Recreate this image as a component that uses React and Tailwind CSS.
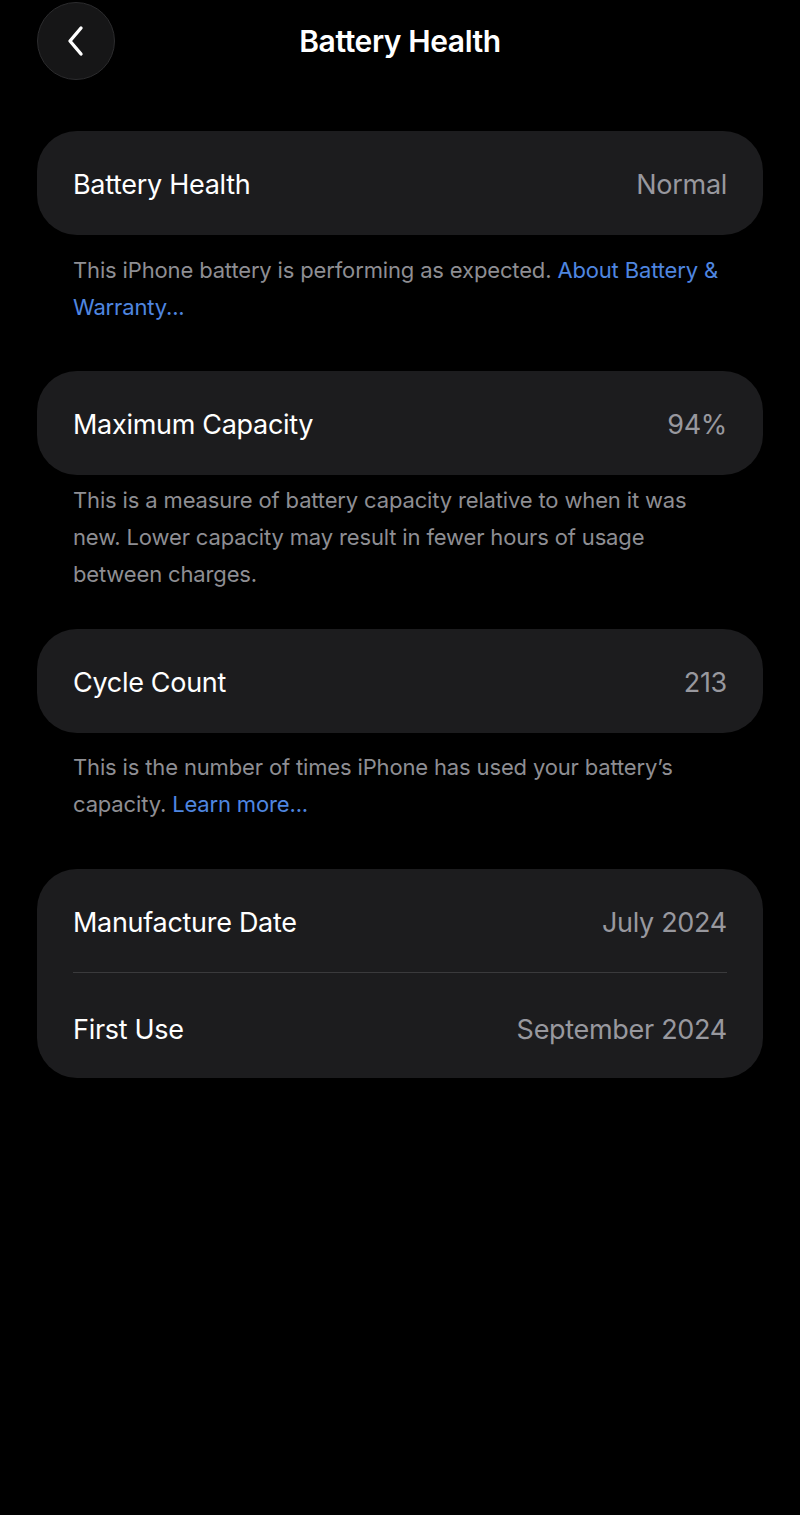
import React from 'react';

const FONT = { fontFamily: 'Inter, "Noto Sans", "Liberation Sans", sans-serif' };

function Row({ label, value, className = 'h-[104px] pt-[4px]' }) {
  return (
    <div className={`flex items-center justify-between px-[36px] ${className}`}>
      <span className="text-[27px] text-white tracking-[-0.3px]">{label}</span>
      <span className="text-[27px] text-[#98989e] tracking-[-0.3px]">{value}</span>
    </div>
  );
}

function Card({ children, className = '' }) {
  return <div className={`bg-[#1c1c1e] rounded-[40px] ${className}`}>{children}</div>;
}

function Note({ children, className = '' }) {
  return (
    <p className={`px-[36px] text-[22px] leading-[37px] text-[#8e8e93] tracking-[-0.15px] whitespace-nowrap ${className}`}>
      {children}
    </p>
  );
}

const Link = ({ children }) => <span className="text-[#4f86e0]">{children}</span>;

export default function App() {
  return (
    <div className="w-[800px] min-h-[1515px] bg-black" style={FONT}>
      {/* Nav bar */}
      <div className="grid grid-cols-[1fr_auto_1fr] items-center h-[82px] px-[37px]">
        <button className="w-[78px] h-[78px] rounded-full bg-[#161617] border border-[#2c2c2e] flex items-center justify-center">
          <svg width="20" height="32" viewBox="0 0 20 32" fill="none">
            <path d="M15 3 L4 16 L15 29" stroke="white" strokeWidth="3.4" strokeLinecap="round" strokeLinejoin="round" />
          </svg>
        </button>
        <h1 className="text-[30px] font-semibold text-white tracking-[-0.4px]">Battery Health</h1>
        <div />
      </div>

      <div className="px-[37px]">
        <Card className="mt-[49px]">
          <Row label="Battery Health" value="Normal" />
        </Card>
        <Note className="mt-[17px]">
          This iPhone battery is performing as expected. <Link>About Battery &amp;</Link>
          <br />
          <Link>Warranty...</Link>
        </Note>

        <Card className="mt-[45px]">
          <Row label="Maximum Capacity" value="94%" />
        </Card>
        <Note className="mt-[7px]">
          This is a measure of battery capacity relative to when it was
          <br />
          new. Lower capacity may result in fewer hours of usage
          <br />
          between charges.
        </Note>

        <Card className="mt-[36px]">
          <Row label="Cycle Count" value="213" />
        </Card>
        <Note className="mt-[16px]">
          This is the number of times iPhone has used your battery’s
          <br />
          capacity. <Link>Learn more...</Link>
        </Note>

        <Card className="mt-[46px]">
          <Row label="Manufacture Date" value="July 2024" className="h-[103px] pt-[6px]" />
          <div className="mx-[36px] h-px bg-[#3a3a3c]" />
          <Row label="First Use" value="September 2024" className="h-[105px] pt-[9px]" />
        </Card>
      </div>
    </div>
  );
}
